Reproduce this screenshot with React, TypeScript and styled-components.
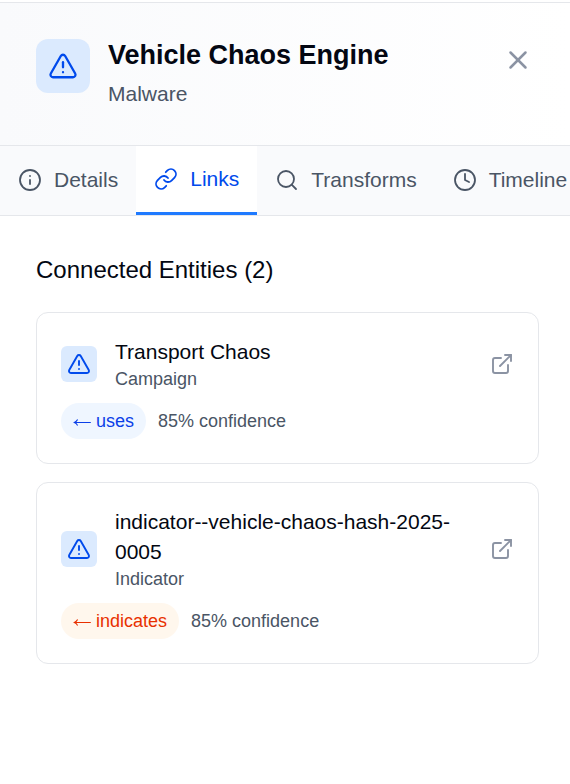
import React from 'react';
import styled, { createGlobalStyle } from 'styled-components';
import { TriangleAlert, X, Info, Link, Search, Clock, ExternalLink } from 'lucide-react';

const GlobalStyle = createGlobalStyle`
  * { box-sizing: border-box; }
  body {
    margin: 0;
    background: #ffffff;
    font-family: 'Liberation Sans', Arial, sans-serif;
    color: #030712;
    overflow: hidden;
  }
  h1, h2, h3, p { margin: 0; font-weight: 400; }
  button { font: inherit; border: 0; background: none; padding: 0; cursor: pointer; }
  svg { display: block; flex-shrink: 0; }
`;

const Panel = styled.main`
  width: 570px;
  height: 784px;
  padding-top: 2px;
  overflow: hidden;
  background: #ffffff;
`;

const Header = styled.header`
  display: flex;
  align-items: flex-start;
  height: 144px;
  padding: 36px 36px 0;
  border-top: 1px solid #e5e7eb;
  border-bottom: 1px solid #e5e7eb;
  background: linear-gradient(to right, #f9fafc, #ffffff);
`;

const IconTile = styled.div<{ $size: number; $radius: number }>`
  display: flex;
  align-items: center;
  justify-content: center;
  flex-shrink: 0;
  width: ${({ $size }) => $size}px;
  height: ${({ $size }) => $size}px;
  border-radius: ${({ $radius }) => $radius}px;
  background: #dbeafe;
  color: #004aec;
`;

const Heading = styled.div`
  flex: 1;
  margin-left: 18px;
`;

const Title = styled.h1`
  font-size: 27px;
  font-weight: 700;
  line-height: 32px;
`;

const Kind = styled.p`
  margin-top: 8px;
  font-size: 21px;
  line-height: 30px;
  color: #4a5565;
`;

const CloseButton = styled.button`
  margin: 6px 1px 0 0;
  color: #8b93a3;
`;

const TabBar = styled.nav`
  display: flex;
  height: 70px;
  border-bottom: 1px solid #e5e7eb;
  background: #f9fafc;
`;

const Tab = styled.button<{ $active?: boolean }>`
  display: flex;
  align-items: center;
  flex-shrink: 0;
  gap: 12px;
  padding: 0 18px;
  font-size: 21px;
  line-height: 30px;
  color: ${({ $active }) => ($active ? '#004aec' : '#4a5565')};
  background: ${({ $active }) => ($active ? '#ffffff' : 'transparent')};
  border-bottom: ${({ $active }) => ($active ? '3px solid #1f7aff' : '1px solid transparent')};
`;

const Content = styled.section`
  padding: 36px 31px 0 36px;
`;

const SectionTitle = styled.h2`
  margin-bottom: 24px;
  font-size: 24px;
  line-height: 36px;
`;

const EntityList = styled.div`
  display: flex;
  flex-direction: column;
  gap: 18px;
`;

const Card = styled.article`
  padding: 24px;
  border: 1px solid #e5e7eb;
  border-radius: 12px;
`;

const EntityRow = styled.div`
  display: flex;
  align-items: center;
  gap: 18px;
`;

const EntityText = styled.div`
  flex: 1;
  min-width: 0;
`;

const EntityName = styled.h3`
  font-size: 21px;
  line-height: 30px;
`;

const EntityType = styled.p`
  font-size: 18px;
  line-height: 24px;
  color: #4a5565;
`;

const OpenButton = styled.button`
  color: #8b93a3;
`;

const Relation = styled.div`
  display: flex;
  align-items: center;
  gap: 12px;
  margin-top: 12px;
`;

const Pill = styled.span<{ $tone: 'blue' | 'orange' }>`
  display: flex;
  align-items: center;
  gap: 5px;
  height: 36px;
  padding: 6px 12px;
  border-radius: 18px;
  font-size: 18px;
  line-height: 24px;
  color: ${({ $tone }) => ($tone === 'blue' ? '#0b3fe8' : '#e83000')};
  background: ${({ $tone }) => ($tone === 'blue' ? '#eff6ff' : '#fff7ed')};
`;

const ArrowIcon = styled.svg`
  width: 18px;
  height: 18px;
  fill: none;
  stroke: currentColor;
  stroke-width: 1.1;
`;

const Confidence = styled.span`
  font-size: 18px;
  line-height: 24px;
  color: #4a5565;
`;

const tabs = [
  { label: 'Details', Icon: Info },
  { label: 'Links', Icon: Link, active: true },
  { label: 'Transforms', Icon: Search },
  { label: 'Timeline', Icon: Clock },
];

const entities: { name: string; type: string; relation: string; tone: 'blue' | 'orange' }[] = [
  { name: 'Transport Chaos', type: 'Campaign', relation: 'uses', tone: 'blue' },
  {
    name: 'indicator--vehicle-chaos-hash-2025-0005',
    type: 'Indicator',
    relation: 'indicates',
    tone: 'orange',
  },
];

export default function App() {
  return (
    <>
      <GlobalStyle />
      <Panel>
        <Header>
          <IconTile $size={54} $radius={12}>
            <TriangleAlert size={30} strokeWidth={1.85} />
          </IconTile>
          <Heading>
            <Title>Vehicle Chaos Engine</Title>
            <Kind>Malware</Kind>
          </Heading>
          <CloseButton aria-label="Close">
            <X size={30} strokeWidth={2} />
          </CloseButton>
        </Header>
        <TabBar>
          {tabs.map(({ label, Icon, active }) => (
            <Tab key={label} $active={active}>
              <Icon size={24} strokeWidth={1.8} />
              {label}
            </Tab>
          ))}
        </TabBar>
        <Content>
          <SectionTitle>Connected Entities (2)</SectionTitle>
          <EntityList>
            {entities.map(({ name, type, relation, tone }) => (
              <Card key={name}>
                <EntityRow>
                  <IconTile $size={36} $radius={6}>
                    <TriangleAlert size={24} strokeWidth={1.9} />
                  </IconTile>
                  <EntityText>
                    <EntityName>{name}</EntityName>
                    <EntityType>{type}</EntityType>
                  </EntityText>
                  <OpenButton aria-label="Open entity">
                    <ExternalLink size={24} strokeWidth={1.9} />
                  </OpenButton>
                </EntityRow>
                <Relation>
                  <Pill $tone={tone}>
                    <ArrowIcon viewBox="0 0 18 18" aria-hidden="true">
                      <path d="M1.3 10.5H17.8M4.6 7.6Q3.6 9.6 1.3 10.5Q3.6 11.4 4.6 13.4" />
                    </ArrowIcon>
                    {relation}
                  </Pill>
                  <Confidence>85% confidence</Confidence>
                </Relation>
              </Card>
            ))}
          </EntityList>
        </Content>
      </Panel>
    </>
  );
}
